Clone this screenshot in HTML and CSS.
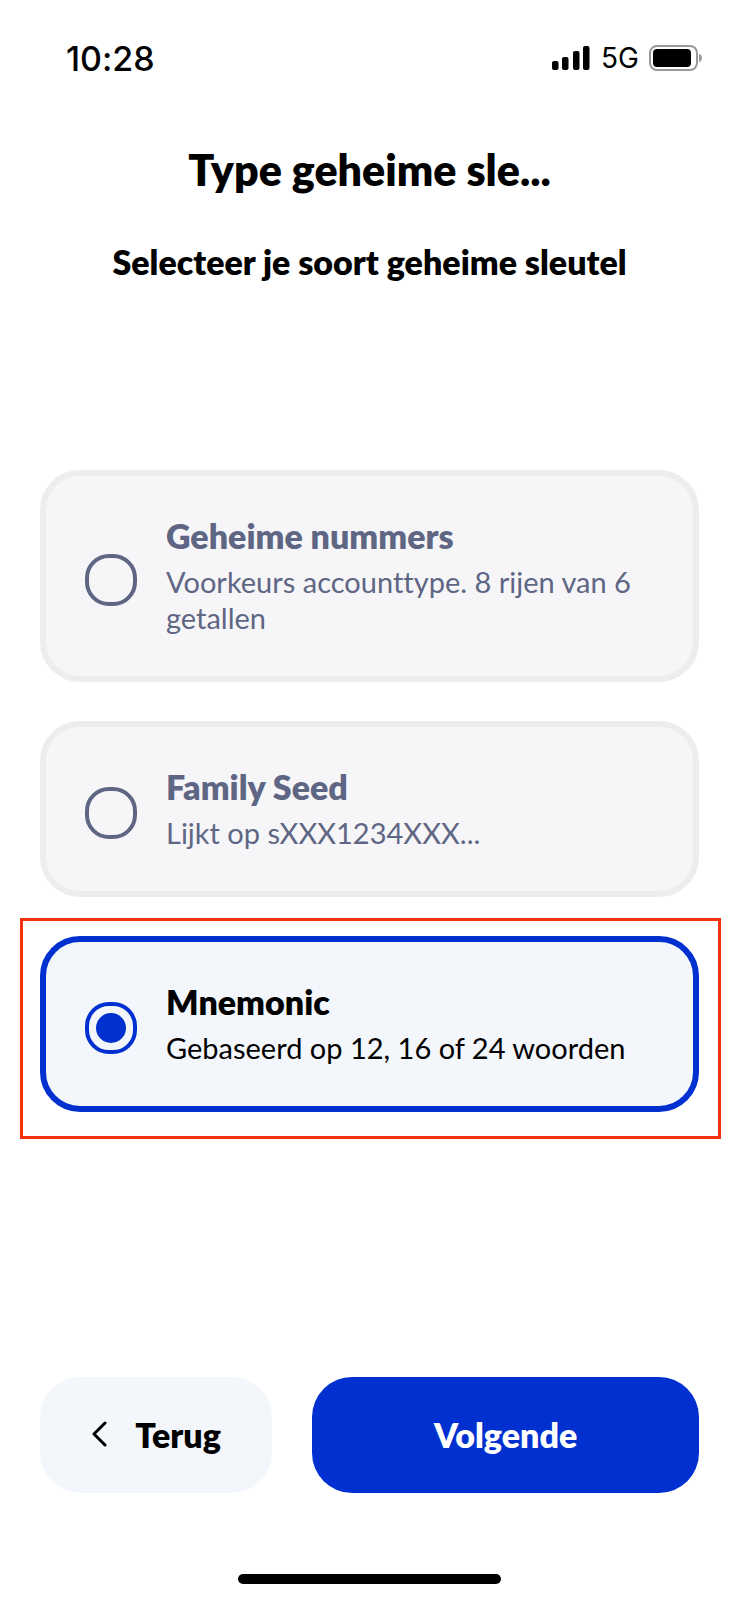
FILE: index.html
```
<!DOCTYPE html>
<html lang="nl">
<head>
    <meta charset="UTF-8">
    <meta name="viewport" content="width=device-width, initial-scale=1.0">
    <title>Type geheime sleutel</title>
    <link rel="stylesheet" href="styles.css">
</head>
<body>
  <div class="app">
    <div class="status-bar">
      <span class="time">10:28</span>
      <div class="status-icons">
        <svg class="signal" width="40" height="26" viewBox="0 0 40 26">
          <rect x="1" y="16" width="6.500" height="9" rx="2"/>
          <rect x="11" y="12" width="6.500" height="13" rx="2"/>
          <rect x="22" y="6" width="6.500" height="19" rx="2"/>
          <rect x="32" y="1" width="6.500" height="24" rx="2"/>
        </svg>
        <span class="network">5G</span>
        <svg class="battery" width="54" height="26" viewBox="0 0 54 26">
          <rect x="1" y="1" width="47" height="24" rx="7" fill="none" stroke="#999" stroke-width="2"/>
          <rect x="4" y="4" width="38" height="18" rx="4"/>
          <path d="M50 9c4 1 4 7 0 8z" fill="#999"/>
        </svg>
      </div>
    </div>

    <header class="header">
      <h1>Type geheime sle...</h1>
      <h2>Selecteer je soort geheime sleutel</h2>
    </header>

    <main class="options">
      <label class="option">
        <input class="option-radio" type="radio" name="secret-type" value="numbers">
        <span class="option-text">
          <span class="option-title">Geheime nummers</span>
          <span class="option-desc">Voorkeurs accounttype. 8 rijen van 6 getallen</span>
        </span>
      </label>
      <label class="option">
        <input class="option-radio" type="radio" name="secret-type" value="seed">
        <span class="option-text">
          <span class="option-title">Family Seed</span>
          <span class="option-desc">Lijkt op sXXX1234XXX...</span>
        </span>
      </label>
      <div class="highlight">
        <label class="option">
          <input class="option-radio" type="radio" name="secret-type" value="mnemonic" checked>
          <span class="option-text">
            <span class="option-title">Mnemonic</span>
            <span class="option-desc">Gebaseerd op 12, 16 of 24 woorden</span>
          </span>
        </label>
      </div>
    </main>

    <footer class="footer">
      <button class="button button-back" type="button">
        <svg width="16" height="26" viewBox="0 0 16 26" fill="none" stroke="currentColor" stroke-width="3" stroke-linecap="round" stroke-linejoin="round">
          <path d="M14 2L3 13l11 11"/>
        </svg>
        Terug
      </button>
      <button class="button button-next" type="button">Volgende</button>
    </footer>
    <div class="home-bar"></div>
  </div>
</body>
</html>
```
FILE: styles.css
```
* {
    box-sizing: border-box;
}
body {
    font-family: Lato, "Open Sans", sans-serif;
    font-variant-ligatures: none;
    background-color: #fff;
    color: #000;
    margin: 0;
}
.app {
    display: flex;
    flex-direction: column;
    min-height: 100vh;
    padding: 38px 40px 16px;
}
.status-bar {
    display: flex;
    justify-content: space-between;
    align-items: center;
    height: 40px;
    padding: 0 0 0 26px;
    font-family: Inter, sans-serif;
}
.time {
    font-size: 34px;
    font-weight: 500;
}
.status-icons {
    display: flex;
    align-items: center;
    gap: 10px;
    margin-right: -4px;
}
.network {
    font-size: 28px;
}
.header {
    margin-top: 68px;
    text-align: center;
}
h1 {
    margin: 0;
    font-size: 43px;
    font-weight: 800;
    line-height: 48px;
}
h2 {
    margin: 48px 0 0;
    font-size: 34px;
    font-weight: 800;
    line-height: 40px;
}
.options {
    display: flex;
    flex-direction: column;
    gap: 39px;
    margin-top: 188px;
}
.option {
    display: flex;
    align-items: center;
    gap: 29px;
    padding: 44px 36px 36px 39px;
    background: #f6f6f9;
    border: 6px solid #ededf0;
    border-radius: 40px;
    color: #5f6684;
    cursor: pointer;
}
.option-radio {
    appearance: none;
    flex: none;
    display: grid;
    place-items: center;
    width: 52px;
    height: 52px;
    margin: 0;
    border: 4px solid #5f6684;
    border-radius: 24px;
}
.option-text {
    display: flex;
    flex-direction: column;
    gap: 8px;
}
.option-title {
    font-size: 34px;
    font-weight: 800;
    line-height: 32px;
}
.option-desc {
    padding: 4px 0;
    font-size: 29px;
    line-height: 36px;
}
.option:has(:checked) {
    background: #f3f6fb;
    border-color: #0030cf;
    color: #000;
}
.option-radio:checked {
    border-color: #0030cf;
}
.option-radio:checked::before {
    content: "";
    width: 30px;
    height: 30px;
    border-radius: 50%;
    background: #0030cf;
}
.highlight {
    position: relative;
}
.highlight::after {
    content: "";
    position: absolute;
    inset: -18px -22px -27px -20px;
    border: 3px solid #f5320f;
    pointer-events: none;
}
.footer {
    display: flex;
    gap: 40px;
    margin-top: auto;
}
.button {
    display: flex;
    justify-content: center;
    align-items: center;
    gap: 28px;
    height: 116px;
    padding: 0 0 2px;
    border: none;
    border-radius: 40px;
    font-family: inherit;
    font-size: 34px;
    font-weight: 800;
    cursor: pointer;
}
.button-back {
    flex: 3;
    background: #f3f6fb;
    color: #000;
}
.button-next {
    flex: 5;
    background: #0030cf;
    color: #fff;
}
.home-bar {
    width: 40%;
    height: 10px;
    margin: 81px auto 0;
    border-radius: 5px;
    background: #000;
}
```
